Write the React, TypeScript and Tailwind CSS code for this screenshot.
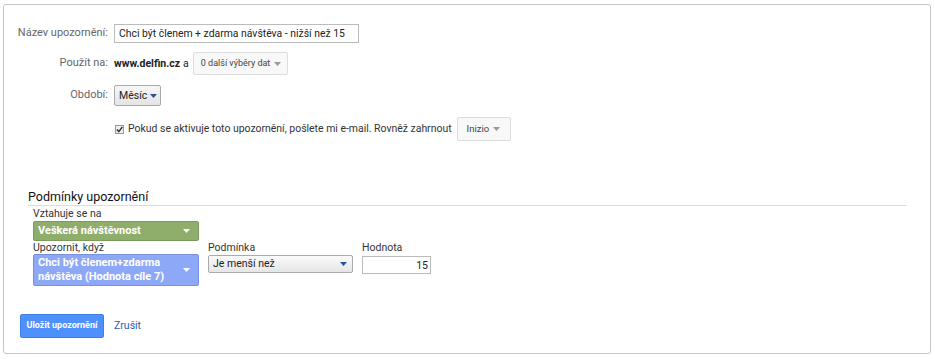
function Caret({ className }: { className: string }) {
  return (
    <svg width="7" height="4" viewBox="0 0 7 4" className={className}>
      <path d="M0 0 L7 0 L3.5 4 Z" fill="currentColor" />
    </svg>
  );
}

export default function App() {
  return (
    <div className="w-[935px] h-[359px] bg-white pt-[4px] pl-[3px] font-['Roboto',sans-serif] text-[11px] text-[#222]">
      <div className="w-[928px] h-[350px] border border-[#c6c6c6] rounded-[3px] relative">
        {/* Horní formulář */}
        <div className="pt-[19px]">
          <div className="flex items-center h-[18px]">
            <div className="w-[107px] text-right text-[#666] pr-[3px] whitespace-nowrap">Název upozornění:</div>
            <input
              readOnly
              value="Chci být členem + zdarma návštěva - nižší než 15"
              className="ml-[3px] w-[245px] h-[19px] border border-[#bbb] px-[4px] text-[10.4px] text-[#222] outline-none"
            />
          </div>

          <div className="flex items-center h-[23px] mt-[10px]">
            <div className="w-[107px] text-right text-[#666] pr-[3px] whitespace-nowrap">Použít na:</div>
            <span className="ml-[3px] font-bold text-[#222] text-[10.5px]">www.delfin.cz</span>
            <span className="ml-[3px] text-[10.5px]">a</span>
            <button className="ml-[4px] h-[23px] w-[95px] flex items-center justify-between pl-[7px] pr-[6px] border border-[#ddd] rounded-[2px] bg-[#f8f8f8] text-[9px] text-[#444] whitespace-nowrap">
              <span>0 další výběry dat</span>
              <Caret className="text-[#999]" />
            </button>
          </div>

          <div className="flex items-center h-[21px] mt-[10px]">
            <div className="w-[107px] text-right text-[#666] pr-[3px] whitespace-nowrap">Období:</div>
            <button className="ml-[3px] h-[21px] w-[47px] flex items-center pl-[4px] border border-[#aaa] rounded-[2px] bg-gradient-to-b from-[#f6f6f6] to-[#e4e4e4] text-[10.5px] text-[#222] whitespace-nowrap">
              <span>Měsíc</span>
              <Caret className="text-[#2b4f9a] ml-[3px]" />
            </button>
          </div>

          <div className="flex items-center h-[24px] mt-[11px] pl-[111px]">
            <span className="w-[9px] h-[9px] border border-[#999] bg-[#eee] flex items-center justify-center">
              <svg width="7" height="7" viewBox="0 0 7 7">
                <path d="M0.8 3.6 L2.8 5.6 L6.3 1" stroke="#333" strokeWidth="1.4" fill="none" />
              </svg>
            </span>
            <span className="ml-[4px] text-[#333] text-[10.45px] whitespace-nowrap">Pokud se aktivuje toto upozornění, pošlete mi e-mail. Rovněž zahrnout</span>
            <button className="ml-[5px] h-[24px] w-[54px] flex items-center justify-between pl-[9px] pr-[10px] border border-[#ddd] rounded-[2px] bg-[#f8f8f8] text-[9.5px] text-[#444]">
              <span>Inizio</span>
              <Caret className="text-[#999]" />
            </button>
          </div>
        </div>

        {/* Podmínky upozornění */}
        <div className="mt-[49px] ml-[24px] w-[879px]">
          <div className="text-[12.5px] text-[#111] leading-[13px]">Podmínky upozornění</div>
          <div className="h-px bg-[#ddd] mt-[2px]" />
          <div className="pl-[5px]">
            <div className="text-[#333] mt-[1px] leading-[13px] text-[10.5px]">Vztahuje se na</div>
            <button className="mt-[1px] w-[166px] h-[20px] flex items-center justify-between pl-[4px] pr-[8px] rounded-[2px] bg-[#8fad6b] border border-[#7c9a59] text-white font-bold text-[11px] whitespace-nowrap">
              <span>Veškerá návštěvnost</span>
              <Caret className="text-white" />
            </button>

            <div className="flex">
              <div className="w-[175px]">
                <div className="text-[#333] leading-[13px] text-[10.5px]">Upozornit, když</div>
                <button className="mt-0 w-[166px] h-[32px] flex items-center justify-between pl-[4px] pr-[8px] rounded-[2px] bg-[#8ea8f8] border border-[#7791e0] text-white font-bold text-[11px] text-left leading-[14px] whitespace-nowrap">
                  <span>Chci být členem+zdarma<br />návštěva (Hodnota cíle 7)</span>
                  <Caret className="text-white" />
                </button>
              </div>
              <div className="w-[154px]">
                <div className="text-[#333] leading-[13px] text-[10.5px]">Podmínka</div>
                <button className="mt-[1px] w-[145px] h-[18px] flex items-center justify-between pl-[4px] pr-[5px] border border-[#aaa] rounded-[2px] bg-gradient-to-b from-[#fafafa] to-[#e6e6e6] text-[10.5px] text-[#222] whitespace-nowrap">
                  <span>Je menší než</span>
                  <Caret className="text-[#2b4f9a]" />
                </button>
              </div>
              <div>
                <div className="text-[#333] leading-[13px] text-[10.5px]">Hodnota</div>
                <input
                  readOnly
                  value="15"
                  className="mt-[2px] w-[69px] h-[18px] border border-[#bbb] px-[2px] text-right text-[10.5px] text-[#222] outline-none"
                />
              </div>
            </div>
          </div>
        </div>

        {/* Tlačítka */}
        <div className="absolute left-[16px] top-[309px] flex items-center">
          <button className="h-[24px] w-[84px] rounded-[2px] bg-[#4d90fe] border border-[#3f7fe6] text-white font-bold text-[9px] whitespace-nowrap">
            Uložit upozornění
          </button>
          <span className="ml-[10px] text-[#2a5db0] text-[10.5px]">Zrušit</span>
        </div>
      </div>
    </div>
  );
}
